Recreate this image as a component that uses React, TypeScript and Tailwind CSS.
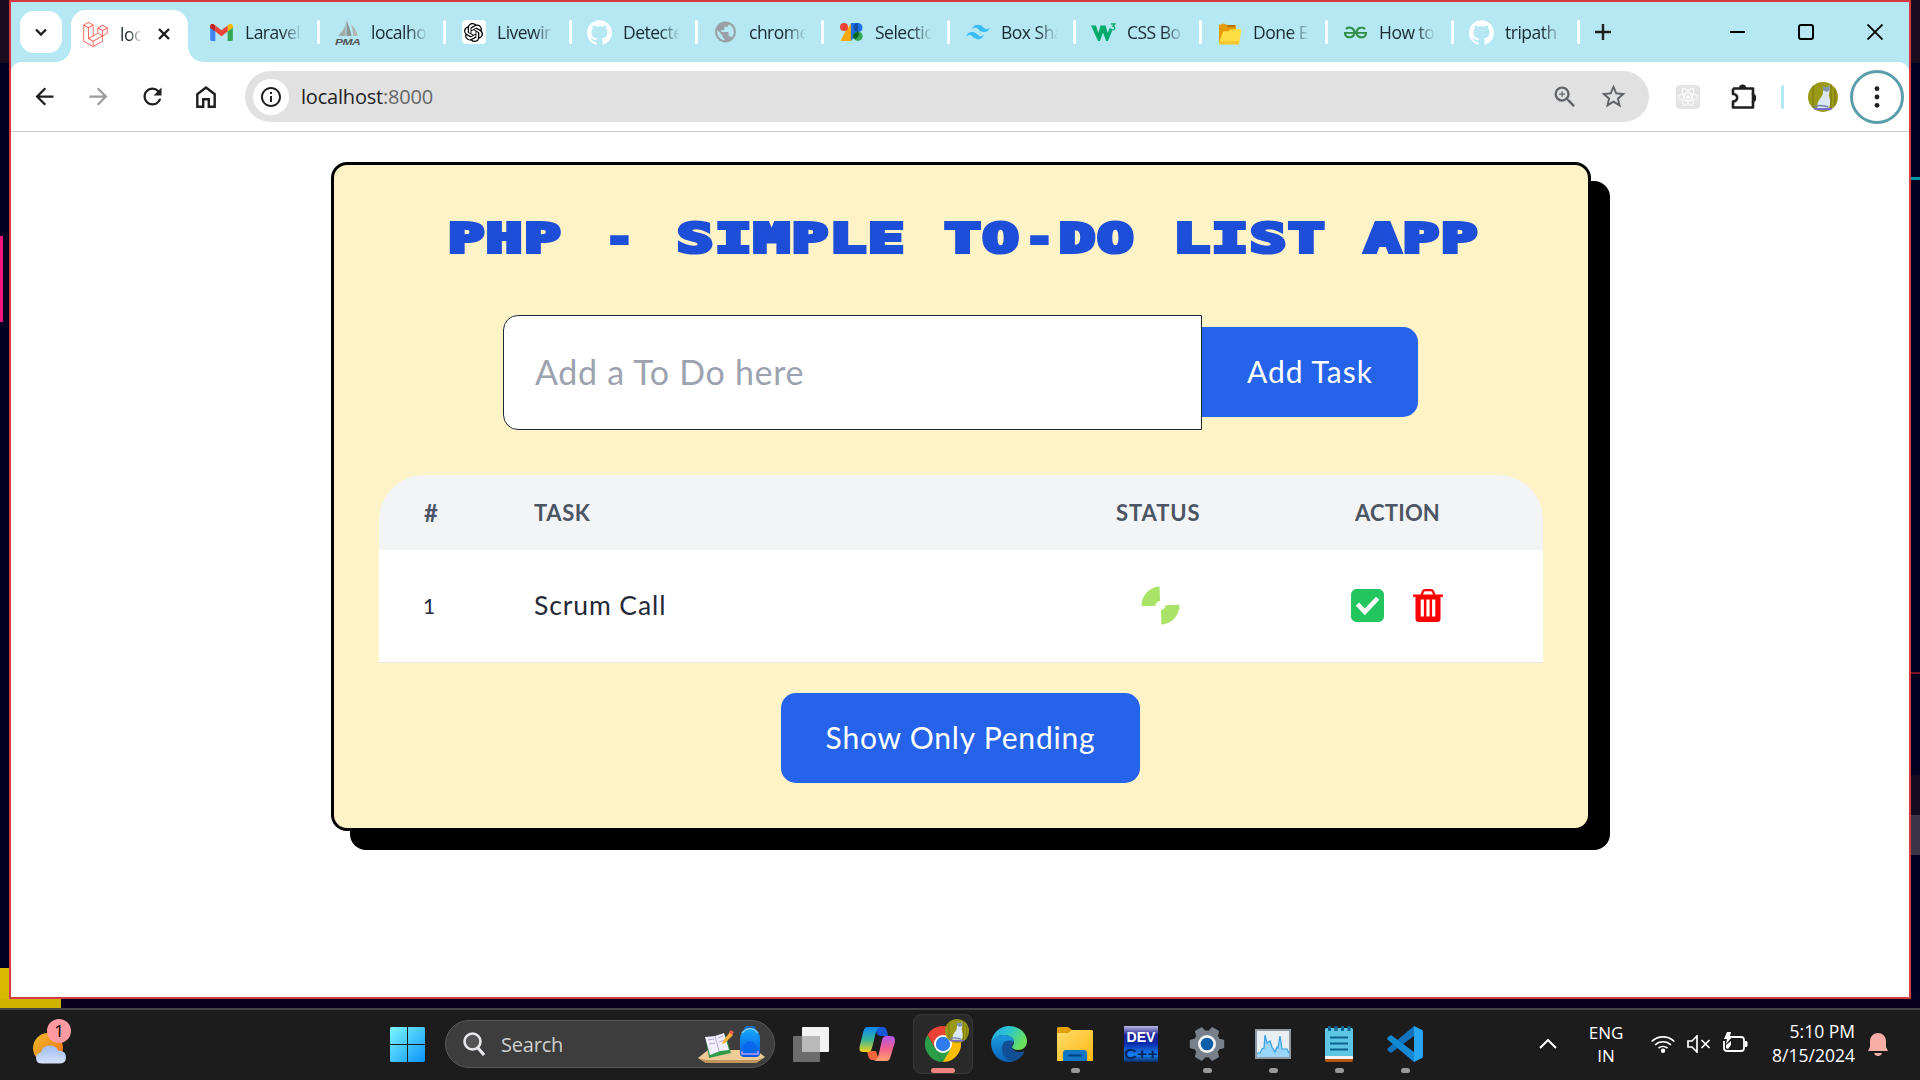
import React from "react";
import { SiLaravel, SiOpenai, SiGithub, SiTailwindcss, SiGeeksforgeeks, SiReact } from "react-icons/si";
import { MdArrowBack, MdArrowForward, MdRefresh, MdZoomIn, MdStarBorder, MdPublic, MdInfoOutline } from "react-icons/md";

type TabItem = { title: string; icon: React.ReactNode };

const GmailIcon = () => (
  <svg viewBox="0 0 24 18" className="h-[17px] w-[23px]">
    <path d="M0 18V2.5L5.5 6.6V18H1.6Q0 18 0 16.4Z" fill="#4285f4" />
    <path d="M18.5 18V6.6L24 2.5V16.4Q24 18 22.4 18Z" fill="#34a853" />
    <path d="M18.5 1.6V8L24 4V2.2C24 0 21.6-.9 19.9.5Z" fill="#fbbc04" />
    <path d="M5.5 8V1.6L12 6.5l6.500-4.900V8L12 13Z" fill="#ea4335" />
    <path d="M0 2.200V4l5.500 4V1.600L4.100.5C2.400-.9 0 0 0 2.200Z" fill="#c5221f" />
  </svg>
);

const PmaIcon = () => (
  <svg viewBox="0 0 25 25" className="h-[25px] w-[25px]">
    <path d="M3 16C7 12 10 8 10.500 3v13Z" fill="#a3a9a9" />
    <path d="M11.500 16V0c2 5 4 10 5 16Z" fill="#8d9596" />
    <path d="M16 4c3 3 6 8 7 12h-5C18 12 17 8 16 4Z" fill="#b3b6b5" />
    <text x="0" y="24.500" fontSize="9.500" fontWeight="bold" fontStyle="italic" fontFamily="Liberation Sans, sans-serif" fill="#555" textLength="25" lengthAdjust="spacingAndGlyphs">PMA</text>
  </svg>
);

const OpenAiTabIcon = () => (
  <span className="flex h-6 w-6 items-center justify-center rounded bg-white">
    <SiOpenai className="h-[19px] w-[19px] text-black" />
  </span>
);

const GithubTabIcon = () => <SiGithub className="h-[25px] w-[25px] text-white" />;

const SelectionIcon = () => (
  <svg viewBox="0 0 23 18" className="h-[18px] w-[23px]">
    <path d="M8 3v15H.5Z M11 0v18H1Z" fill="#f9a70b" />
    <circle cx="4" cy="4" r="4" fill="#ea4335" />
    <path d="M11 0h7a4.500 4.500 0 0 1 4.500 4.500C22.500 7 21 9 18.500 9L11 18Z" fill="#1a73e8" />
    <circle cx="18" cy="13.300" r="4.700" fill="#34a853" />
    <path d="M18 0a4.500 4.500 0 0 0 0 9Z" fill="#174ea6" />
    <path d="M14 10.500a4.700 4.700 0 0 0 0 5.500 4.700 4.700 0 0 0 4-7.400Z" fill="#0d652d" />
  </svg>
);

const W3Icon = () => (
  <svg viewBox="0 0 25 18" className="h-[20px] w-[25px]">
    <path d="M0 2.500h5l2.300 7.500L9.500 2.500h5l2.300 7.500L19 4.500l2 3.500-4 10h-1.800L12 9.500 9 18H7Z" fill="#04aa6d" />
    <path d="M20 1h4l-2 2.300c2.600.2 2.300 3.700-.2 3.500-1 0-1.700-.5-1.900-1.100" fill="none" stroke="#04aa6d" strokeWidth="1.300" />
  </svg>
);

const YellowFolder = () => (
  <svg viewBox="0 0 24 22" className="mt-1 h-[22px] w-6">
    <path d="M1 20V2L6 .5 9 2h8q1 0 1 1v4L5 20Z" fill="#e59b00" />
    <path d="M9 2h8v2H9Z" fill="#b87400" />
    <path d="M5 8.500 11 8l1-1.500L23.500 6l-2.300 14H1Z" fill="#ffdd45" />
    <path d="m1 21.500.7-3L21.500 18l-.8 3.500Z" fill="#f6c52d" />
  </svg>
);

const tabs: TabItem[] = [
  { title: "Laravel", icon: <GmailIcon /> },
  { title: "localho", icon: <PmaIcon /> },
  { title: "Livewir", icon: <OpenAiTabIcon /> },
  { title: "Detecte", icon: <GithubTabIcon /> },
  { title: "chrome", icon: <MdPublic className="h-[26px] w-[26px] text-[#9aa0a6]" /> },
  { title: "Selectio", icon: <SelectionIcon /> },
  { title: "Box Sha", icon: <SiTailwindcss className="h-6 w-6 text-[#38bdf8]" /> },
  { title: "CSS Bo", icon: <W3Icon /> },
  { title: "Done E", icon: <YellowFolder /> },
  { title: "How to", icon: <SiGeeksforgeeks className="h-[23px] w-[23px] text-[#2f8d46]" /> },
  { title: "tripath", icon: <GithubTabIcon /> },
];

function TabStrip() {
  return (
    <div className="flex h-[60px] w-full bg-[#b5e8f2] text-[17.5px] tracking-[-0.5px] text-[#1b2a30]">
      <div className="mt-[9px] ml-[9px] flex h-[42px] w-[42px] items-center justify-center rounded-[14px] bg-white">
        <svg viewBox="0 0 14 8" className="h-2 w-[14px]">
          <path d="m2 1.500 5 5 5-5" fill="none" stroke="#1f1f1f" strokeWidth="2.400" />
        </svg>
      </div>
      <div className="mt-auto -ml-[6px] h-[15px] w-[15px] bg-[radial-gradient(circle_at_0_0,transparent_14.5px,#fff_15px)]" />
      <div className="mt-2 flex w-[117px] items-center rounded-t-[15px] bg-white pl-3">
        <SiLaravel className="mb-1 h-[25px] w-[25px] shrink-0 text-[#ff4a3d]" />
        <span className="mb-[3px] ml-3 w-[22px] shrink-0 whitespace-nowrap [mask-image:linear-gradient(to_right,#000_40%,transparent_100%)]">loc</span>
        <svg viewBox="0 0 12 12" className="mb-[5px] ml-4 h-3 w-3 shrink-0">
          <path d="m1 1 10 10M11 1 1 11" stroke="#1f1f1f" strokeWidth="2.400" />
        </svg>
      </div>
      <div className="mt-auto h-[15px] w-[15px] bg-[radial-gradient(circle_at_100%_0,#b5e8f2_14.5px,#fff_15px)]" />
      {tabs.map((t, i) => (
        <div key={i} className={i === 0 ? "flex h-[60px] w-[117px] items-center pl-[6px]" : "flex h-[60px] w-[126px] items-center pl-[15px]"}>
          <span className="flex w-[25px] shrink-0 items-center justify-center">{t.icon}</span>
          <span className="ml-[11px] w-[57px] shrink-0 whitespace-nowrap [mask-image:linear-gradient(to_right,#000_65%,transparent_100%)]">{t.title}</span>
          <span className="ml-auto h-6 w-[3px] shrink-0 rounded-sm bg-white" />
        </div>
      ))}
      <div className="flex items-center pl-[15px]">
        <svg viewBox="0 0 16 16" className="h-4 w-4">
          <path d="M8 0v16M0 8h16" stroke="#1f1f1f" strokeWidth="2.400" />
        </svg>
      </div>
      <div className="ml-auto flex items-center gap-[53px] pr-[26px]">
        <svg viewBox="0 0 15 16" className="h-4 w-[15px]">
          <path d="M0 8h15" stroke="#000" strokeWidth="2" />
        </svg>
        <svg viewBox="0 0 16 16" className="h-4 w-4">
          <rect x="1" y="1" width="14" height="14" rx="2" fill="none" stroke="#000" strokeWidth="2" />
        </svg>
        <svg viewBox="0 0 16 16" className="h-4 w-4">
          <path d="m.5.5 15 15M15.500.5l-15 15" stroke="#000" strokeWidth="1.800" />
        </svg>
      </div>
    </div>
  );
}

function CatAvatar({ className }: { className: string }) {
  return (
    <svg viewBox="0 0 30 30" className={className}>
      <clipPath id="avatarClip">
        <circle cx="15" cy="15" r="15" />
      </clipPath>
      <g clipPath="url(#avatarClip)">
        <path d="M0 0h30v30H0Z" fill="#9a9a16" />
        <path d="M5 0v30M23 0v30M27 0v30" stroke="#7c7c10" strokeWidth="1.200" />
        <path d="M6 26h18v2H6Z" fill="#7b6bd6" />
        <path d="m15 4 1.500 1h3l2-1.500V9c0 2-1 3-.5 5s1.500 5 1 8c0 2-1 4-3 4H9c1-2 0-4 1.500-7 1.500-3 4.500-5 4.500-9Z" fill="#dbe7f5" />
        <path d="m15 4 1.500 1h3l2-1.500V8L19 10l-4-1.500Z" fill="#8095ac" />
        <path d="M6 25c5-3 10-1 14 0" stroke="#7186a0" strokeWidth="1.500" fill="none" />
      </g>
    </svg>
  );
}

function Toolbar() {
  return (
    <div className="w-full bg-[#b5e8f2]">
      <div className="flex h-[70px] items-center rounded-t-[10px] border-b border-[#c9c9c9] bg-white text-[#1f1f1f]">
        <MdArrowBack className="ml-5 h-[27px] w-[27px]" />
        <MdArrowForward className="ml-[27px] h-[27px] w-[27px] text-[#9c9c9c]" />
        <MdRefresh className="ml-[27px] h-[27px] w-[27px]" />
        <svg viewBox="0 0 20 22" className="ml-[30px] h-[22px] w-5">
          <path d="M1.300 8.200 10 1.600l8.700 6.600v12.500h-5.900v-7.500H7.200v7.500H1.300Z" fill="none" stroke="#1f1f1f" strokeWidth="2.400" />
        </svg>
        <div className="ml-[29px] flex h-[51px] w-[1404px] items-center rounded-full bg-[#e1e1e1] pl-2">
          <span className="flex h-9 w-9 items-center justify-center rounded-full bg-white">
            <MdInfoOutline className="h-6 w-6" />
          </span>
          <span className="ml-[12px] text-[20px] tracking-[-0.2px]">
            localhost<span className="text-[#666]">:8000</span>
          </span>
          <MdZoomIn className="ml-auto h-[28px] w-[28px] text-[#5f6368]" />
          <MdStarBorder className="mr-[21px] ml-[20px] h-[29px] w-[29px] text-[#5f6368]" />
        </div>
        <span className="ml-[27px] flex h-6 w-6 items-center justify-center rounded-sm bg-[#e4e4e4]">
          <SiReact className="h-5 w-5 text-white" />
        </span>
        <svg viewBox="0 0 25 25" className="ml-[31px] h-[25px] w-[25px]">
          <path d="M2 4.500h20V10.500M22 17.500v6H2V17.500c5.500 0 5.500-7.500 0-7.500V4.500" fill="none" stroke="#1f1f1f" strokeWidth="2.600" strokeLinejoin="round" />
          <path d="M8 4a3.600 3.600 0 0 1 7.200 0ZM21.500 10a4 4 0 0 1 0 8Z" fill="#1f1f1f" />
          <path d="M22 9v10" stroke="#1f1f1f" strokeWidth="2.600" />
        </svg>
        <span className="ml-[25px] h-6 w-[3px] rounded bg-[#b5e8f2]" />
        <CatAvatar className="ml-6 h-[30px] w-[30px]" />
        <span className="ml-[12px] flex h-[54px] w-[54px] items-center justify-center rounded-full border-[3px] border-[#5a9eab]">
          <svg viewBox="0 0 6 22" className="h-[22px] w-[6px]">
            <circle cx="3" cy="2.700" r="2.400" fill="#1f1f1f" />
            <circle cx="3" cy="11" r="2.400" fill="#1f1f1f" />
            <circle cx="3" cy="19.300" r="2.400" fill="#1f1f1f" />
          </svg>
        </span>
      </div>
    </div>
  );
}

const blades = "M18.600.5A19 19 0 0 0 .5 20.200L14.500 19.800A5.200 5.200 0 0 1 19 15Z";

function TodoCard() {
  return (
    <div className="mt-[30px] ml-[320px] flex h-[669px] w-[1260px] flex-col items-center rounded-[16px] border-[3px] border-black bg-[#fef2c7] font-['Lato',sans-serif] shadow-[19px_19px_0_#000]">
      <h1 className="mt-[44px] ml-[5px] flex h-[60px] w-[1030px] items-center justify-center">
        <span className="origin-center scale-x-150 font-['DejaVu_Sans_Mono',monospace] text-[39.5px] leading-none font-bold tracking-[1.68px] whitespace-pre text-[#1d4ed8] [-webkit-text-stroke:4.2px_#1d4ed8]">
          PHP <span className="inline-block scale-x-75">-</span> SIMPLE TO<span className="inline-block scale-x-75">-</span>DO LIST APP
        </span>
      </h1>
      <form className="mt-[46px] mr-[1px] flex items-center">
        <div className="flex h-[115px] w-[699px] items-center rounded-l-[15px] border border-[#1f2937] bg-white pb-[3px] pl-[31px] text-[34px] tracking-[0.7px] text-[#9ca3af]">
          Add a To Do here
        </div>
        <button type="button" className="mb-px h-[90px] w-[216px] rounded-r-[15px] bg-[#2563eb] pb-px text-[30px] tracking-[1px] text-white">
          Add Task
        </button>
      </form>
      <div className="mt-[45px] w-[1164px]">
        <div className="flex h-[75px] items-center rounded-t-[45px] bg-[#f3f4f6] text-[22px] font-bold text-[#4b5563]">
          <span className="w-[155px] pl-[45px] text-[24px]">#</span>
          <span className="w-[582px] tracking-[0.6px]">TASK</span>
          <span className="w-[239px] tracking-[0.9px]">STATUS</span>
          <span className="tracking-[0.2px]">ACTION</span>
        </div>
        <div className="flex h-[113px] items-center border-b border-[#e5e7eb] bg-white text-[26.5px] text-[#1f2937]">
          <span className="w-[155px] pl-[44px] text-[21px]">1</span>
          <span className="w-[607px] tracking-[0.9px]">Scrum Call</span>
          <svg viewBox="0 0 39 39" className="mb-[2px] h-[39px] w-[39px]">
            <path d={blades} fill="#a9e368" />
            <path d={blades} fill="#a9e368" transform="rotate(180 19.500 19.500)" />
          </svg>
          <svg viewBox="0 32 448 448" className="mb-[2px] ml-[171px] h-[33px] w-[33px]">
            <path
              fill="#22c55e"
              d="M370 480H78c-43 0-78-35-78-78V110c0-43 35-78 78-78h292c43 0 78 35 78 78v292c0 43-35 78-78 78z"
            />
            <path d="m88 238 100 104 174-184" fill="none" stroke="#fff" strokeWidth="62" />
          </svg>
          <svg viewBox="0 0 30 33" className="mb-[2px] ml-[29px] h-[33px] w-[30px]">
            <path d="m8.500 6 1.500-3.500Q10.500 1.200 12 1.200h6q1.500 0 2 1.300L21.500 6" fill="none" stroke="#f00" strokeWidth="2.200" />
            <path d="M0 5.500h30v2.300H0Z" fill="#f00" />
            <path d="M2.500 7h25v22.500a3.500 3.500 0 0 1-3.500 3.500H6a3.500 3.500 0 0 1-3.500-3.500Z" fill="#f00" />
            <path d="M9.300 10.500v17M15 10.500v17M20.700 10.500v17" stroke="#fff" strokeWidth="3.200" />
          </svg>
        </div>
      </div>
      <button type="button" className="mt-[30px] mr-[2px] h-[90px] w-[359px] rounded-[15px] bg-[#2563eb] pb-px pl-px text-[30px] tracking-[0.8px] text-white">
        Show Only Pending
      </button>
    </div>
  );
}

function StartIcon() {
  return (
    <svg viewBox="0 0 35 35" className="h-[35px] w-[35px]">
      <defs>
        <linearGradient id="win" x1="0" y1="0" x2="35" y2="35" gradientUnits="userSpaceOnUse">
          <stop stopColor="#7df7fd" />
          <stop offset="1" stopColor="#0a93fb" />
        </linearGradient>
      </defs>
      <path d="M0 1 1 0h16v17H0ZM18 0h16l1 1v16H18ZM0 18h17v17H1l-1-1ZM18 18h17v16l-1 1H18Z" fill="url(#win)" />
    </svg>
  );
}

function SearchArt() {
  return (
    <svg viewBox="0 0 67 38" className="h-[38px] w-[67px]">
      <defs>
        <linearGradient id="pack" x1="0" y1="0" x2="0" y2="1">
          <stop stopColor="#16a9ff" />
          <stop offset="1" stopColor="#0757d8" />
        </linearGradient>
      </defs>
      <path d="M0 32 10 24h48l9 7-9 6H8Z" fill="#efcb98" />
      <path d="m0 32 8 5h50l9-6-8 3H8Z" fill="#bf945d" />
      <path d="m8 14 20-4 5 17-22 5Z" fill="#2f9a48" />
      <path d="m7 11 10-1 9-3 5 17-9 1-10 4Z" fill="#f4efff" />
      <path d="m17 10 4 15M10 14l6-1M11 18l6-1M20 12l5-2M21 16l6-2" stroke="#b1a9cf" strokeWidth="1" />
      <path d="m25 15 7-9 3 3-8 8-3 1Z" fill="#ffb13b" />
      <path d="m31 6 2-2 3 2-2 3Z" fill="#f05b55" />
      <path d="M47 4c0-5 10-5 10 0" fill="none" stroke="#0872d8" strokeWidth="2" />
      <path d="M42 13c0-14 20-14 20 0v14q0 4-4 4H46q-4 0-4-4Z" fill="url(#pack)" />
      <path d="M44 7c5-6 11-6 16 0" fill="none" stroke="#7acbff" strokeWidth="1.500" />
      <path d="M45 22c1-9 13-9 14 0v5H45Z" fill="#0868ec" />
      <path d="M44 25v3h16v-3" fill="none" stroke="#b49bff" strokeWidth="1.500" />
    </svg>
  );
}

function TaskViewIcon() {
  return (
    <svg viewBox="0 0 36 36" className="h-9 w-9">
      <rect x="9" y="1" width="27" height="25" rx="1" fill="#f3f3f3" />
      <rect x="0" y="10" width="27" height="26" rx="1" fill="#6c6c6c" />
      <path d="M9 10h18v16H9Z" fill="#b9b9b9" />
    </svg>
  );
}

function CopilotIcon() {
  return (
    <svg viewBox="0 0 36 34" className="h-[34px] w-9">
      <defs>
        <linearGradient id="cpA" x1="0" y1="0" x2="0" y2="1">
          <stop stopColor="#0d86f2" />
          <stop offset=".5" stopColor="#35b59b" />
          <stop offset="1" stopColor="#f6d21b" />
        </linearGradient>
        <linearGradient id="cpB" x1="0" y1="0" x2="0" y2="1">
          <stop stopColor="#b254ec" />
          <stop offset=".5" stopColor="#f1608e" />
          <stop offset="1" stopColor="#ffa36b" />
        </linearGradient>
      </defs>
      <path d="M16 0h8c3 0 4 3 5 9h-8l-3-2Z" fill="#1657d8" />
      <path d="M8 24h9l3 9h-7c-3 0-4-4-5-9Z" fill="#f2663b" />
      <path d="M9 0h12c-3 1-4 5-5 9l-3 12c-1 3-2 4-5 4H4c-4 0-4-3-3-7L4 6c1-4 2-6 5-6Z" fill="url(#cpA)" />
      <path d="M27 9h5c4 0 4 3 4 6l-4 13c-1 4-2 6-5 6H15c3-1 4-4 5-8l3-13c1-3 2-4 4-4Z" fill="url(#cpB)" />
    </svg>
  );
}

function ChromeIcon() {
  return (
    <svg viewBox="0 0 36 36" className="h-9 w-9">
      <path d="M18 18 2.400 9A18 18 0 0 1 33.600 9Z" fill="#ea4335" />
      <path d="M18 18 33.600 9A18 18 0 0 1 18 36Z" fill="#fbbc04" />
      <path d="M18 9h15.600l-7.800 13.500Z" fill="#fbbc04" />
      <path d="M25.800 22.500 18 36l-7.800-13.500Z" fill="#2b9e49" />
      <path d="M10.200 22.500 2.400 9 18 9Z" fill="#ea4335" />
      <path d="M2.400 9 10.200 22.500 18 36A18 18 0 0 1 2.400 9Z" fill="#2b9e49" />
      <circle cx="18" cy="18" r="9" fill="#fff" />
      <circle cx="18" cy="18" r="7.200" fill="#2f7cf0" />
    </svg>
  );
}

function EdgeIcon() {
  return (
    <svg viewBox="0 0 36 36" className="h-9 w-9">
      <defs>
        <linearGradient id="edT" x1="0" y1="0" x2="1" y2=".4">
          <stop stopColor="#23a5e6" />
          <stop offset=".5" stopColor="#2cc5d0" />
          <stop offset="1" stopColor="#69e05a" />
        </linearGradient>
        <linearGradient id="edL" x1="0" y1="0" x2="0" y2="1">
          <stop stopColor="#1a9ae0" />
          <stop offset="1" stopColor="#0a62b8" />
        </linearGradient>
      </defs>
      <path d="M0 17C1 7 9 0 18 0c10 0 18 7 18 15 0 6-4 9-9 9-4 0-6-1.500-6-3 0-1 2-2 2-5 0-4-5-7-10-7-6 0-10 3-13 8Z" fill="url(#edT)" />
      <path d="M0 17c2-5 7-8 13-8 5 0 10 3 10 7-5-2-10 1-10 7 0 6 4 11 10 12-2 .6-3 1-5 1C8 36 0 28 0 17Z" fill="url(#edL)" />
      <path d="M11 22c0-5 3-8 8-7.500 2 .2 3.500 1 3.500 2.500-1 1.500-2 3-1.500 4.500C22 25 26 26 29 26c2 0 3.500-.8 4-.5 1 1-3 8-11 9.800C15 35 11 29 11 22Z" fill="#124f94" />
    </svg>
  );
}

function ExplorerIcon() {
  return (
    <svg viewBox="0 0 36 34" className="h-[34px] w-9">
      <defs>
        <linearGradient id="exF" x1="0" y1="0" x2="1" y2="1">
          <stop stopColor="#ffdc6b" />
          <stop offset="1" stopColor="#fdb813" />
        </linearGradient>
      </defs>
      <path d="M0 1 1 0h10l4 3v5H0Z" fill="#e0a006" />
      <path d="M0 6h11l4-3h20l1 1v30H0Z" fill="url(#exF)" />
      <path d="M6 34V26q0-3 3-3h18q3 0 3 3v8Z" fill="#1176c4" />
      <path d="M12 28.500h12" stroke="#06407e" strokeWidth="2" strokeLinecap="round" />
    </svg>
  );
}

function DevCppIcon() {
  return (
    <svg viewBox="0 0 34 36" className="h-9 w-[34px]">
      <defs>
        <linearGradient id="dv" x1="0" y1="0" x2="0" y2="1">
          <stop stopColor="#b9b9df" />
          <stop offset=".25" stopColor="#20209a" />
          <stop offset=".5" stopColor="#0b2fae" />
          <stop offset=".8" stopColor="#1583f5" />
          <stop offset="1" stopColor="#0a2c68" />
        </linearGradient>
      </defs>
      <path d="M0 0h34v36H0Z" fill="url(#dv)" />
      <text x="2.500" y="16" fontSize="15" fontWeight="bold" fontFamily="Liberation Sans, sans-serif" fill="#fff" textLength="29" lengthAdjust="spacingAndGlyphs">DEV</text>
      <text x="0" y="32.500" fontSize="15.500" fontWeight="bold" fontFamily="Liberation Sans, sans-serif" fill="#06255e" textLength="34" lengthAdjust="spacingAndGlyphs">C++</text>
    </svg>
  );
}

function GearIcon() {
  return (
    <svg viewBox="0 0 36 36" className="h-9 w-9">
      <g fill="#77818b">
        <circle cx="18" cy="18" r="13.500" />
        {[30, 90, 150].map((a) => (
          <path key={a} d="M13 4l1-3.200h8L23 4v28l-1 3.200h-8L13 32Z" transform={`rotate(${a} 18 18)`} />
        ))}
      </g>
      <circle cx="18" cy="18" r="9" fill="#f2f4f6" />
      <circle cx="18" cy="18" r="6.300" fill="#0f5fa8" />
    </svg>
  );
}

function MonitorIcon() {
  return (
    <svg viewBox="0 0 36 30" className="h-[30px] w-9">
      <path d="M0 0h36v30H0Z" fill="#8e9ba6" />
      <path d="M2 2h32v26H2Z" fill="#e9eef2" />
      <path d="M2 24h3l2-4 2-1 1-13 2 8 3-2 2 6 3 5 2-5 1 1 2-12 2 13 5 0 2 4v4H2Z" fill="#9bd5fa" />
      <path d="M2 24h3l2-4 2-1 1-13 2 8 3-2 2 6 3 5 2-5 1 1 2-12 2 13 5 0 2 4" fill="none" stroke="#359fe6" strokeWidth="1.200" />
    </svg>
  );
}

function NotepadIcon() {
  return (
    <svg viewBox="0 0 28 36" className="h-9 w-7">
      <path d="M0 3 1 2h26l1 1v28H0Z" fill="#5cc6e4" />
      <path d="M0 30h28v3H0Z" fill="#f4f4f4" />
      <path d="M0 33h28v2l-1 1H1l-1-1Z" fill="#b6560f" />
      <path d="M5 11.500h18M5 17.500h18M5 23.500h18" stroke="#0b6390" strokeWidth="2" />
      <path d="M4.500 0v5M11 0v5M17.500 0v5M24 0v5" stroke="#0b6390" strokeWidth="3" />
    </svg>
  );
}

function CodeIcon() {
  return (
    <svg viewBox="0 0 36 36" className="h-9 w-9">
      <path d="M27 0v10L4 27l-3-2q-1.500-1.500 0-3Z" fill="#0f73bd" />
      <path d="M27 36V26L4 9l-3 2q-1.500 1.500 0 3Z" fill="#1489d4" />
      <path d="M27 0 35 4q1 .5 1 2v24q0 1.500-1 2l-8 4Z" fill="#27a4f2" />
    </svg>
  );
}

function TaskSlot({ children, running }: { children: React.ReactNode; running?: boolean }) {
  return (
    <div className="flex h-[60px] w-[66px] flex-col items-center">
      <div className="mt-3 flex h-9 items-center">{children}</div>
      {running && <span className="mt-[6px] h-[5px] w-[9px] rounded-full bg-[#9a9a9a]" />}
    </div>
  );
}

function Taskbar() {
  return (
    <div className="flex h-[72px] w-full border-t-2 border-[#444] bg-[#1c1c1c] pt-1 text-white">
      <div className="relative mt-2 ml-[33px] h-12 w-[38px]">
        <svg viewBox="0 0 38 46" className="h-[46px] w-[38px]">
          <defs>
            <linearGradient id="sun" x1="0" y1="0" x2="1" y2="1">
              <stop stopColor="#eebc2e" />
              <stop offset="1" stopColor="#ef6a10" />
            </linearGradient>
            <linearGradient id="cloud" x1="0" y1="0" x2="0" y2="1">
              <stop stopColor="#9dbbf2" />
              <stop offset="1" stopColor="#d5e2fa" />
            </linearGradient>
          </defs>
          <circle cx="15" cy="26" r="15" fill="url(#sun)" />
          <path d="M9 42.500q-6 0-6-5.500Q3 32 8 31.500q1-7 9-7 6 0 8 5 8 0 8 6.500 0 6.500-6 6.500Z" fill="url(#cloud)" transform="translate(0 -1)" />
        </svg>
        <span className="absolute -top-[3px] left-[14px] flex h-6 w-6 items-center justify-center rounded-full bg-[#ff9aa2] text-[17px] text-black">1</span>
      </div>
      <div className="mt-[13px] ml-[319px]">
        <StartIcon />
      </div>
      <div className="mt-[6px] ml-[20px] flex h-12 w-[330px] items-center rounded-full border border-[#5a5a5a] bg-[#3d3d3d] pl-[17px]">
        <svg viewBox="0 0 22 24" className="h-6 w-[22px]">
          <circle cx="9.500" cy="9.500" r="8" fill="#555" stroke="#e6e8ec" strokeWidth="2.600" />
          <path d="m15 16 6 7" stroke="#e6e8ec" strokeWidth="3" />
        </svg>
        <span className="mt-px ml-4 text-[20px] tracking-[-0.2px] text-[#d0d0d0]">Search</span>
        <span className="mt-[2px] mr-[9px] ml-auto">
          <SearchArt />
        </span>
      </div>
      <div className="ml-[3px] flex">
        <TaskSlot>
          <TaskViewIcon />
        </TaskSlot>
        <TaskSlot>
          <CopilotIcon />
        </TaskSlot>
        <div className="relative mx-[3px] flex h-[60px] w-[60px] flex-col items-center rounded-lg border border-[#383838] bg-[#292929]">
          <div className="mt-[11px]">
            <ChromeIcon />
          </div>
          <span className="mt-[6px] h-[5px] w-6 shrink-0 rounded-full bg-[#ee8480]" />
          <span className="absolute top-[4px] left-[31px]">
            <CatAvatar className="h-6 w-6" />
          </span>
        </div>
        <TaskSlot>
          <EdgeIcon />
        </TaskSlot>
        <TaskSlot running>
          <ExplorerIcon />
        </TaskSlot>
        <TaskSlot>
          <DevCppIcon />
        </TaskSlot>
        <TaskSlot running>
          <GearIcon />
        </TaskSlot>
        <TaskSlot running>
          <MonitorIcon />
        </TaskSlot>
        <TaskSlot running>
          <NotepadIcon />
        </TaskSlot>
        <TaskSlot running>
          <CodeIcon />
        </TaskSlot>
      </div>
      <div className="ml-auto flex h-[60px] items-center text-[17px] leading-6">
        <svg viewBox="0 0 18 10" className="h-[10px] w-[18px]">
          <path d="m1 9 8-8 8 8" fill="none" stroke="#fff" strokeWidth="2" />
        </svg>
        <div className="ml-[30px] w-[38px] text-center leading-[23px]">
          <div>ENG</div>
          <div>IN</div>
        </div>
        <svg viewBox="0 0 24 18" className="ml-[26px] h-[18px] w-6">
          <g fill="none" stroke="#fff" strokeWidth="1.700">
            <path d="M.7 6.500a16 16 0 0 1 22.600 0M4 10a11.500 11.500 0 0 1 16 0M7.500 13.200a6.800 6.800 0 0 1 9 0" />
          </g>
          <circle cx="12" cy="15.700" r="2.200" fill="#fff" />
        </svg>
        <svg viewBox="0 0 24 18" className="ml-[12px] h-[18px] w-6">
          <path d="M1 6h4l5-5v16l-5-5H1ZM14.500 5l8 8M22.500 5l-8 8" fill="none" stroke="#fff" strokeWidth="1.700" />
        </svg>
        <svg viewBox="0 0 25 21" className="mb-1 ml-[12px] h-[21px] w-[25px]">
          <path d="M9 5h9q3 0 3 3v8q0 3-3 3H4q-3 0-3-3V9" fill="none" stroke="#fff" strokeWidth="1.800" />
          <path d="M22 9h1.500l1 1v4l-1 1H22ZM4 0h4L7 4h3L3 12l1-5H1ZM3 16v-3l5-4v4l-3 4Z" fill="#fff" />
        </svg>
        <div className="mb-[2px] ml-[18px] w-[89px] text-right text-[17.5px] whitespace-nowrap">
          <div>5:10 PM</div>
          <div>8/15/2024</div>
        </div>
        <svg viewBox="0 0 20 23" className="mr-[32px] ml-[13px] h-[23px] w-5">
          <path d="M2 8a8 8 0 0 1 16 0v6l2 4H0l2-4ZM6 20h8q-1 3-4 3t-4-3Z" fill="#f8aea6" />
        </svg>
      </div>
    </div>
  );
}

export default function App() {
  return (
    <div className="flex h-[1080px] w-[1920px] flex-col overflow-hidden bg-[#07001e] font-['Open_Sans','Noto_Sans',sans-serif]">
      <div className="flex h-[999px]">
        <div className="flex w-[9px] flex-col bg-[#020020]">
          <div className="h-[63px] bg-[#180c1e]" />
          <div className="mt-[173px] h-[86px] w-[3px] bg-[#f5147a]" />
          <div className="mt-auto h-[31px] bg-[#d9b900]" />
        </div>
        <div className="flex w-[1902px] flex-col border-2 border-[#d63a3e] bg-white">
          <TabStrip />
          <Toolbar />
          <TodoCard />
        </div>
        <div className="flex w-[9px] flex-col bg-[#020022]">
          <div className="h-[63px] bg-[#180c1e]" />
          <div className="mt-[114px] h-[3px] bg-[#0097ad]" />
          <div className="mt-[492px] h-[2px] bg-[#7c1626]" />
          <div className="mt-[101px] h-[80px] bg-[#140a22]">
            <div className="mt-[40px] h-[40px] bg-[#3a3548]" />
          </div>
        </div>
      </div>
      <div className="flex h-[9px]">
        <div className="w-[61px] bg-[#d0b000]" />
      </div>
      <Taskbar />
    </div>
  );
}
